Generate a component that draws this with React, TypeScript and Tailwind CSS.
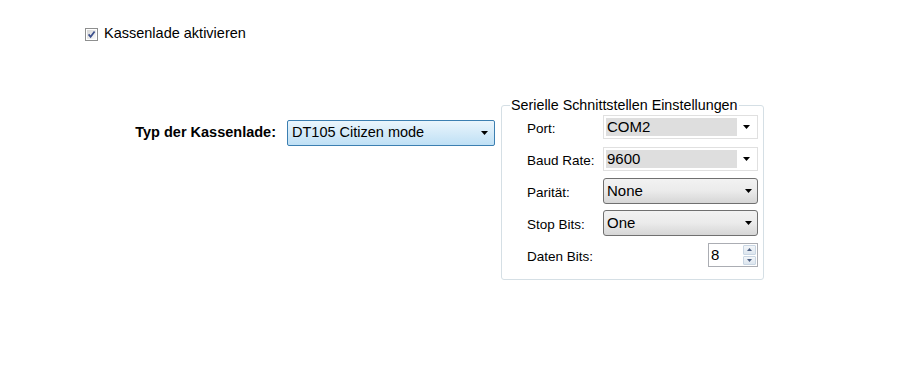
import React from 'react';

function Caret() {
    return (
        <svg width="7" height="4" viewBox="0 0 7 4">
            <path d="M0 0h7L3.5 4z" fill="#000" />
        </svg>
    );
}

function CheckBox() {
    return (
        <svg width="13" height="13" viewBox="0 0 13 13">
            <defs>
                <linearGradient id="cbfill" x1="0" y1="0" x2="1" y2="1">
                    <stop offset="0" stopColor="#d6d6d6" />
                    <stop offset="1" stopColor="#fbfbfb" />
                </linearGradient>
            </defs>
            <rect x="0.5" y="0.5" width="12" height="12" fill="#fff" stroke="#8e8f8f" />
            <rect x="2" y="2" width="9" height="9" fill="url(#cbfill)" />
            <path d="M3.6 6.4l2 2.4L9.6 3.4" fill="none" stroke="#3b4f8c" strokeWidth="1.7" />
        </svg>
    );
}

function SpinButton({ up }: { up?: boolean }) {
    return (
        <div className="flex-1 flex items-center justify-center border border-[#c9d6e3] rounded-[1px] bg-linear-to-b from-[#f3f6f9] to-[#dde6ef]">
            <svg width="5" height="3" viewBox="0 0 5 3">
                <path d={up ? 'M0 3h5L2.5 0z' : 'M0 0h5L2.5 3z'} fill="#4d6185" />
            </svg>
        </div>
    );
}

// flat, read-only look (Port / Baud Rate)
function FlatCombo({ value }: { value: string }) {
    return (
        <div className="w-[155px] h-[24px] border border-[#e0e0e0] bg-white flex p-[2px]">
            <div className="flex-1 bg-[#dedede] flex items-center pl-[1px] text-[15px] text-black">{value}</div>
            <div className="w-[18px] flex items-center justify-center">
                <Caret />
            </div>
        </div>
    );
}

// button style dropdown (Parität / Stop Bits)
function ButtonCombo({ value }: { value: string }) {
    return (
        <div className="w-[155px] h-[26px] shrink-0 border border-[#707070] rounded-[3px] bg-linear-to-b from-[#f2f2f2] via-[#ebebeb] to-[#d6d6d6] flex items-center pl-[3px] pr-[5px]">
            <span className="flex-1 text-[15px] text-black">{value}</span>
            <Caret />
        </div>
    );
}

function Row({ label, children }: { label: string; children: React.ReactNode }) {
    return (
        <div className="h-[24px] flex items-center">
            <span className="w-[76px] pt-[4px] text-[13.5px] text-black">{label}</span>
            {children}
        </div>
    );
}

export default function App() {
    return (
        <div className="w-[907px] h-[388px] bg-white font-['Liberation_Sans',Arial,sans-serif] text-black">
            {/* Kassenlade checkbox */}
            <div className="pl-[85px] pt-[24px] h-[44px] flex items-center gap-[6px]">
                <CheckBox />
                <span className="text-[14.5px]">Kassenlade aktivieren</span>
            </div>

            <div className="mt-[53px] flex items-start">
                <div className="flex items-center mt-[23px]">
                    <span className="w-[276px] text-right font-bold text-[14.5px]">Typ der Kassenlade:</span>
                    <div className="ml-[11px] w-[208px] h-[26px] border border-[#3c7fb1] rounded-[2px] bg-linear-to-b from-[#eaf5fc] to-[#bfe0f5] flex items-center pl-[4px] pr-[6px]">
                        <span className="flex-1 text-[14.5px]">DT105 Citizen mode</span>
                        <Caret />
                    </div>
                </div>

                <fieldset className="ml-[6px] w-[262px] border border-[#d5dfe5] rounded-[3px] pl-[25px] pr-[5px] pt-[2px] pb-[12px]">
                    <legend className="ml-[-17px] px-[1px] text-[14.3px] leading-[16px] text-black">
                        Serielle Schnittstellen Einstellungen
                    </legend>
                    <div className="flex flex-col gap-[8px]">
                        <Row label="Port:">
                            <FlatCombo value="COM2" />
                        </Row>
                        <Row label="Baud Rate:">
                            <FlatCombo value="9600" />
                        </Row>
                        <Row label="Parität:">
                            <ButtonCombo value="None" />
                        </Row>
                        <Row label="Stop Bits:">
                            <ButtonCombo value="One" />
                        </Row>
                        <Row label="Daten Bits:">
                            <div className="ml-auto w-[50px] h-[24px] border border-[#abadb3] bg-white flex items-stretch">
                                <span className="flex-1 pl-[2px] flex items-center text-[15px]">8</span>
                                <div className="w-[15px] flex flex-col gap-[1px] p-[1px]">
                                    <SpinButton up />
                                    <SpinButton />
                                </div>
                            </div>
                        </Row>
                    </div>
                </fieldset>
            </div>
        </div>
    );
}
